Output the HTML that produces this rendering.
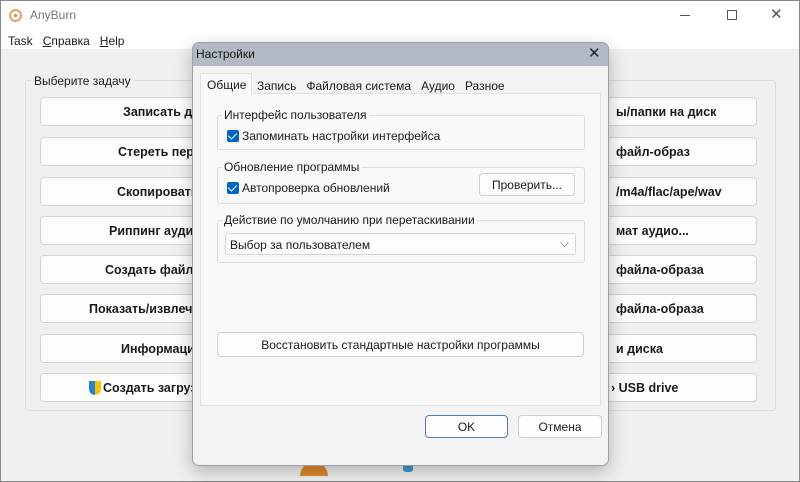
<!DOCTYPE html><html><head><meta charset="utf-8"><style>
*{box-sizing:border-box;margin:0;padding:0}
body{width:800px;height:482px;overflow:hidden;background:#fff;font-family:"Liberation Sans","DejaVu Sans",sans-serif;font-size:12px;color:#1a1a1a;position:relative}
.a{position:absolute}
.btn{position:absolute;background:#fdfdfd;border:1px solid #d4d4d4;border-radius:4px;font-weight:bold;font-size:12.5px;display:flex;align-items:center;justify-content:flex-start;white-space:nowrap;overflow:hidden}
.dbtn{position:absolute;background:#fdfdfd;border:1px solid #d0d0d0;border-radius:4px;display:flex;align-items:center;justify-content:center;font-size:12px}
.grp{position:absolute;border:1px solid #dcdcdc;border-radius:3px}
.lbl{position:absolute;background:#f9f9f9;padding:0 2px;font-size:12px}
.cb{display:inline-block;width:12px;height:12px;background:#0067c0;border-radius:2px;vertical-align:-2px;margin-right:3px;position:relative}
.cb:after{content:"";position:absolute;left:3px;top:1px;width:4px;height:7px;border:solid #fff;border-width:0 1.5px 1.5px 0;transform:rotate(45deg)}
</style></head><body>
<div class="a" style="left:0;top:0;width:800px;height:482px;border:1px solid #888;background:#f0f0f0"></div>
<div class="a" style="left:1px;top:1px;width:798px;height:48px;background:#fff"></div>
<div class="a" style="left:9px;top:9px;width:13px;height:13px;border-radius:50%;border:2px solid #e8a060"></div>
<div class="a" style="left:14px;top:14px;width:3px;height:3px;border-radius:50%;background:#d08040"></div>
<div class="a" style="left:30px;top:8px;color:#777;font-size:12px">AnyBurn</div>
<div class="a" style="left:680px;top:15px;width:10px;height:1px;background:#555"></div>
<div class="a" style="left:727px;top:10px;width:10px;height:10px;border:1px solid #555"></div>
<div class="a" style="left:770px;top:5px;color:#555;font-size:15px">✕</div>
<div class="a" style="left:8px;top:34px;font-size:12px">Task&nbsp;&nbsp; <u>С</u>правка&nbsp;&nbsp; <u>H</u>elp</div>
<div class="a" style="left:25px;top:80px;width:751px;height:331px;border:1px solid #dcdcdc;border-radius:3px"></div>
<div class="a" style="left:31px;top:74px;background:#f0f0f0;padding:0 3px">Выберите задачу</div>
<div class="btn" style="left:40px;top:97px;width:320px;height:29px;padding-left:82px">Записать диск</div>
<div class="btn" style="left:40px;top:137px;width:320px;height:29px;padding-left:77px">Стереть перезаписываемый</div>
<div class="btn" style="left:40px;top:177px;width:320px;height:29px;padding-left:76px">Скопировать диск</div>
<div class="btn" style="left:40px;top:216px;width:320px;height:29px;padding-left:68px">Риппинг аудио CD</div>
<div class="btn" style="left:40px;top:255px;width:320px;height:29px;padding-left:64px">Создать файл-образ</div>
<div class="btn" style="left:40px;top:294px;width:320px;height:29px;padding-left:48px">Показать/извлечь файлы</div>
<div class="btn" style="left:40px;top:334px;width:320px;height:29px;padding-left:80px">Информация о диске</div>
<div class="btn" style="left:40px;top:373px;width:320px;height:29px;padding-left:48px"><span style="display:inline-block;width:12px;height:14px;background:linear-gradient(90deg,#2a7fd4 50%,#f2c400 50%);border-radius:0 0 6px 6px;margin-right:2px"></span>Создать загрузочный USB</div>
<div class="btn" style="left:440px;top:97px;width:317px;height:29px;padding-left:175px">ы/папки на диск</div>
<div class="btn" style="left:440px;top:137px;width:317px;height:29px;padding-left:175px">файл-образ</div>
<div class="btn" style="left:440px;top:177px;width:317px;height:29px;padding-left:175px">/m4a/flac/ape/wav</div>
<div class="btn" style="left:440px;top:216px;width:317px;height:29px;padding-left:175px">мат аудио...</div>
<div class="btn" style="left:440px;top:255px;width:317px;height:29px;padding-left:175px">файла-образа</div>
<div class="btn" style="left:440px;top:294px;width:317px;height:29px;padding-left:175px">файла-образа</div>
<div class="btn" style="left:440px;top:334px;width:317px;height:29px;padding-left:175px">и диска</div>
<div class="btn" style="left:440px;top:373px;width:317px;height:29px;padding-left:170px">› USB drive</div>
<div class="a" style="left:300px;top:462px;width:28px;height:14px;border-radius:14px 14px 0 0;background:#e08a30"></div>
<div class="a" style="left:403px;top:462px;width:10px;height:10px;background:#3a9ad0;border-radius:3px"></div>
<!-- dialog -->
<div class="a" style="left:192px;top:42px;width:417px;height:424px;background:#f3f3f3;border:1px solid #9aa0aa;border-radius:7px;box-shadow:0 6px 18px rgba(0,0,0,.25);overflow:hidden">
<div class="a" style="left:0;top:0;width:417px;height:23px;background:#b4bac5"></div>
<div class="a" style="left:3px;top:4px;font-size:12px;color:#111">Настройки</div>
<div class="a" style="left:395px;top:1px;font-size:15px;color:#222">✕</div>
<div class="a" style="left:7px;top:50px;width:401px;height:313px;background:#f9f9f9;border:1px solid #e2e2e2"></div>
<div class="a" style="left:7px;top:30px;width:52px;height:22px;background:#f9f9f9;border:1px solid #e2e2e2;border-bottom:none"></div>
<div class="a" style="left:14px;top:35px">Общие</div>
<div class="a" style="left:64px;top:36px">Запись&nbsp;&nbsp; Файловая система&nbsp;&nbsp; Аудио&nbsp;&nbsp; Разное</div>
<div class="grp" style="left:24px;top:72px;width:368px;height:35px"></div>
<div class="lbl" style="left:29px;top:65px">Интерфейс пользователя</div>
<div class="a" style="left:34px;top:86px"><span class="cb"></span>Запоминать настройки интерфейса</div>
<div class="grp" style="left:24px;top:124px;width:368px;height:37px"></div>
<div class="lbl" style="left:29px;top:117px">Обновление программы</div>
<div class="a" style="left:34px;top:138px"><span class="cb"></span>Автопроверка обновлений</div>
<div class="dbtn" style="left:286px;top:130px;width:96px;height:23px">Проверить...</div>
<div class="grp" style="left:24px;top:177px;width:368px;height:43px"></div>
<div class="lbl" style="left:29px;top:170px">Действие по умолчанию при перетаскивании</div>
<div class="a" style="left:32px;top:190px;width:351px;height:22px;background:#fdfdfd;border:1px solid #d4d4d4;border-radius:3px;padding:4px 4px">Выбор за пользователем<span style="position:absolute;right:6px;top:2px;color:#666">⌵</span></div>
<div class="dbtn" style="left:24px;top:289px;width:367px;height:25px">Восстановить стандартные настройки программы</div>
<div class="dbtn" style="left:232px;top:372px;width:83px;height:23px;border:1px solid #4a7eb0">OK</div>
<div class="dbtn" style="left:325px;top:372px;width:84px;height:23px">Отмена</div>
</div>
</body></html>
